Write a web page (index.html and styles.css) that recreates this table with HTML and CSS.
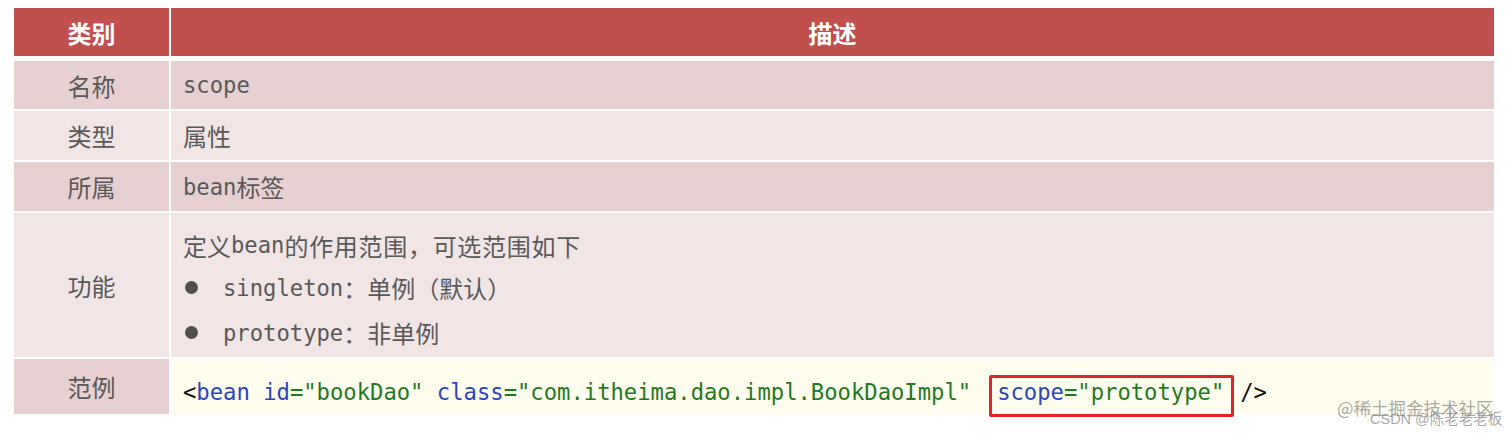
FILE: index.html
```html
<!DOCTYPE html>
<html lang="zh-CN">
<head>
<meta charset="utf-8">
<title>bean scope</title>
<link rel="stylesheet" href="styles.css">
</head>
<body>
<div class="page">
  <div class="table">
    <div class="cell hd">类别</div>
    <div class="cell hd">描述</div>

    <div class="cell lbl dark">名称</div>
    <div class="cell val dark"><span class="mono">scope</span></div>

    <div class="cell lbl light">类型</div>
    <div class="cell val light"><span class="cn">属性</span></div>

    <div class="cell lbl dark">所属</div>
    <div class="cell val dark"><span class="mono">bean</span><span class="cn">标签</span></div>

    <div class="cell lbl light">功能</div>
    <div class="cell val light multi">
      <div class="line l1"><span class="cn">定义</span><span class="mono">bean</span><span class="cn wide">的作用范围，可选范围如下</span></div>
      <div class="line l2"><span class="dot"></span><span class="mono">singleton</span><span class="cn">：单例（默认）</span></div>
      <div class="line l3"><span class="dot"></span><span class="mono">prototype</span><span class="cn">：非单例</span></div>
    </div>

    <div class="cell lbl dark">范例</div>
    <div class="cell val code"><span class="mono codeline"><span class="k">&lt;</span><span class="b">bean id</span><span class="g">="bookDao"</span> <span class="b">class</span><span class="g">="com.itheima.dao.impl.BookDaoImpl"</span><span class="box"><span class="b">scope</span><span class="g">="prototype"</span></span><span class="k end">/&gt;</span></span></div>
  </div>
  <div class="wm wm1">@稀土掘金技术社区</div>
  <div class="wm wm2">CSDN @陈老老老板</div>
</div>
</body>
</html>
```
FILE: styles.css
```css
html, body {
  margin: 0;
  padding: 0;
  background: #ffffff;
}
body {
  font-family: "Noto Sans CJK SC", "DejaVu Sans", sans-serif;
  color: #595959;
}
.page {
  position: relative;
  width: 1512px;
  height: 436px;
  padding: 8px 0 0 14px;
  box-sizing: border-box;
}
.table {
  display: grid;
  width: 1480px;
  grid-template-columns: 155px 1323px;
  grid-template-rows: 51px 48px 49px 49px 144px 55px;
  column-gap: 2px;
  row-gap: 2px;
}
.cell {
  display: flex;
  align-items: center;
  font-size: 24px;
}
.hd {
  background: #c0504d;
  color: #ffffff;
  font-weight: bold;
  justify-content: center;
  margin-bottom: 3px;
}
.lbl {
  justify-content: center;
}
.val {
  padding-left: 12px;
}
.dark { background: #e7d0d1; }
.light { background: #f2e5e6; }
.code { background: #fefdee; padding-top: 19px; box-sizing: border-box; }
.mono {
  font-family: "DejaVu Sans Mono", "Noto Sans CJK SC", monospace;
  font-size: 22.2px;
}
.cn {
  font-family: "Noto Sans CJK SC", sans-serif;
  font-size: 24px;
}
.wide { letter-spacing: 0.7px; }
.multi {
  flex-direction: column;
  align-items: flex-start;
  justify-content: flex-start;
  padding-top: 12px;
}
.line {
  display: flex;
  align-items: center;
  height: 44px;
}
.l1 { height: 40px; }
.l2, .l3 { height: 45px; }
.dot {
  width: 13px;
  height: 13px;
  border-radius: 50%;
  background: #4f4f4f;
  margin: 0 25px 0 2px;
}
.codeline {
  line-height: 26px;
  white-space: pre;
}
.k { color: #111111; }
.b { color: #2a46bd; }
.g { color: #1f7a1f; }
.box {
  display: inline-block;
  border: 3px solid #e3222a;
  border-radius: 2px;
  padding: 1px 7px 9px 5px;
  margin-left: 18px;
  line-height: 26px;
}
.end { margin-left: 6px; }
.wm {
  position: absolute;
  white-space: nowrap;
  font-family: "Noto Sans CJK SC", sans-serif;
  color: rgba(140, 140, 140, 0.75);
}
.wm1 {
  left: 1337px;
  top: 396px;
  font-size: 17.5px;
  line-height: 24px;
}
.wm2 {
  left: 1370px;
  top: 408px;
  font-size: 14.5px;
  line-height: 22px;
  font-family: "Liberation Sans", "Noto Sans CJK SC", sans-serif;
}
```
